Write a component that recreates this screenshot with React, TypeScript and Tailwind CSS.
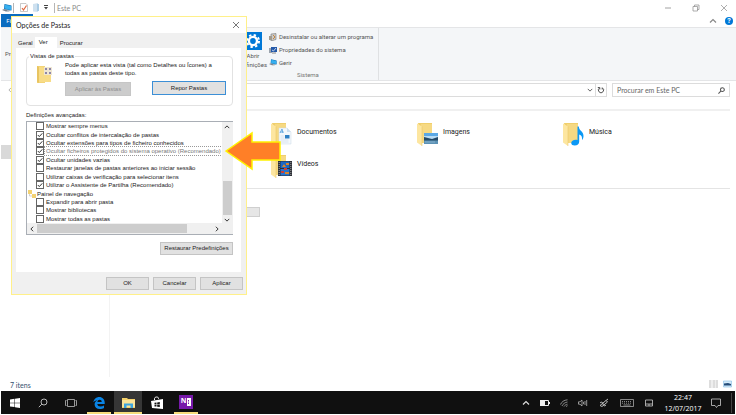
import React, {useState} from "react";

const UI_FONT = "font-[Roboto,'Open_Sans',sans-serif]";
const LABEL_FONT = "font-[Lato,'Open_Sans',sans-serif]";
const CLOCK_FONT = "font-['Open_Sans','Noto_Sans',sans-serif]";
const DIALOG_FONT = "font-['Liberation_Sans',Arial,sans-serif]";

interface Option {
    label: string;
    checked: boolean;
    selected?: boolean;
}

const viewOptions: Option[] = [
    { label: "Mostrar sempre menus", checked: false },
    { label: "Ocultar conflitos de intercalação de pastas", checked: true },
    { label: "Ocultar extensões para tipos de ficheiro conhecidos", checked: true },
    { label: "Ocultar ficheiros protegidos do sistema operativo (Recomendado)", checked: true, selected: true },
    { label: "Ocultar unidades vazias", checked: true },
    { label: "Restaurar janelas de pastas anteriores ao iniciar sessão", checked: false },
    { label: "Utilizar caixas de verificação para selecionar itens", checked: false },
    { label: "Utilizar o Assistente de Partilha (Recomendado)", checked: true },
];

const navigationOptions: Option[] = [
    { label: "Expandir para abrir pasta", checked: false },
    { label: "Mostrar bibliotecas", checked: false },
    { label: "Mostrar todas as pastas", checked: false },
];

function Chevron(props: { dir: "up" | "down" | "left" | "right", className?: string }) {
    const paths = {
        up: "M1 5.5 4 2.5 7 5.5",
        down: "M1 2.5 4 5.5 7 2.5",
        left: "M5.5 1 2.5 4 5.5 7",
        right: "M2.5 1 5.5 4 2.5 7",
    };
    return (
        <svg viewBox="0 0 8 8" className={props.className || "size-1.5"} fill="none" stroke="currentColor" strokeWidth="1.2">
            <path d={paths[props.dir]}/>
        </svg>
    );
}

function PcIcon(props: { className: string }) {
    return (
        <svg viewBox="0 0 20 16" className={props.className}>
            <path d="M1 11.5 7 10l11 3-5 2.5H8z" fill="#a9b4bd"/>
            <path d="M5 0l14 3v10L4 10z" fill="#0c71b8"/>
            <path d="M6 1.300l12 2.700v8L5.200 9z" fill="#36b0f0"/>
            <path d="M0 12l4-1.500 7 2-3 2z" fill="#777f88"/>
        </svg>
    );
}

function FolderIcon(props: { children?: React.ReactNode }) {
    return (
        <svg viewBox="0 0 21 24" className="h-6 w-[21px] shrink-0">
            <path d="M1 1h14v19H5z" fill="#f0cf6c"/>
            <path d="M4 2h11v19H4z" fill="#f6d983"/>
            <path d="M0 1.500 5 4.500V24L0 20.500z" fill="#fde6a0"/>
            <path d="M5 4.500V24" stroke="#e5c260" strokeWidth=".5"/>
            {props.children}
        </svg>
    );
}

function DocumentsIcon() {
    return (
        <FolderIcon>
            <path d="M8 6h8l4 4v12H8z" fill="#f4f8fc" stroke="#cbd9e6" strokeWidth=".5"/>
            <path d="M16 6v4h4z" fill="#cbdff1"/>
            <path d="M9 11l2-4 1 4M9.500 10h3" stroke="#4a9bdc" strokeWidth=".8" fill="none"/>
            <path d="M9.500 14h4M9.500 16h4M9.500 18h8M9.500 20h8" stroke="#c0d3e5" strokeWidth=".5"/>
            <path d="M14 13h4.500v3.500H14z" fill="#2f80c4"/>
        </FolderIcon>
    );
}

function PicturesIcon() {
    return (
        <FolderIcon>
            <path d="M7 11h14v11H7z" fill="#b8dcf5"/>
            <path d="M7 11h14v3H7z" fill="#5ba8e5"/>
            <path d="M7 15l4 1 4 1 6-2v4H7z" fill="#234a69"/>
            <path d="M7 18.500h14V22H7z" fill="#5c92b5"/>
            <path d="M8 20h10" stroke="#a4c8de" strokeWidth=".6"/>
        </FolderIcon>
    );
}

function MusicIcon() {
    return (
        <FolderIcon>
            <path d="M14.500 4.500h1.300c.2 4.500 4.700 4.500 4.700 9.500 0 1.500-.5 3-1.500 4 .4-3-.5-5-2.800-5.500v7c0 2.500-1.800 4-4.500 4-2 0-3.500-.8-3.500-2.500 0-2 2-3.300 4.500-3.300.7 0 1.300.1 1.800.3z" fill="#0b98f5"/>
        </FolderIcon>
    );
}

function VideosIcon() {
    return (
        <FolderIcon>
            <path d="M7 7h14v15H7z" fill="#2c2f36"/>
            <path d="M9.500 7.500h9v6.500h-9z" fill="#1b67c5"/>
            <path d="M9.500 15h9v6.500h-9z" fill="#2674cf"/>
            <path d="M11 13l2-3 2 3zM15 9h3v2h-3zM14 18h4v2h-4z" fill="#d9862b"/>
            <path d="M10 17h3v2h-3zM13 14h3v2h-3z" fill="#c93f3b"/>
            <path d="M8.200 8v14M19.800 8v14" stroke="#bbb" strokeWidth=".8" strokeDasharray="1 1"/>
        </FolderIcon>
    );
}

function TitleBar() {
    return (
        <header className="flex h-3.5 items-center justify-between pl-px pr-2 pt-px text-[#8a8a8a]">
            <div className="flex items-center">
                <PcIcon className="h-2 w-2.5"/>
                <span className="ml-px h-2.5 border-l border-[#b5b5b5]"/>
                <svg viewBox="0 0 8 9" className="ml-1.5 h-[9px] w-2">
                    <path d="M.5.5h5.500l1.500 1.500v6.500h-7z" fill="#fff" stroke="#b2b2b2" strokeWidth=".7"/>
                    <path d="M2 5l1.500 2L6.500 2.500" fill="none" stroke="#e0663d" strokeWidth="1.200"/>
                </svg>
                <svg viewBox="0 0 7 9" className="ml-[5px] h-[9px] w-[7px]">
                    <path d="M0 1l5-1v9L0 8.500z" fill="#cfe1ef"/>
                    <path d="M4 1h2v7H4z" fill="#a9cbe4"/>
                </svg>
                <svg viewBox="0 0 4 5" className="ml-1 h-[5px] w-1" fill="#444">
                    <path d="M0 0h4v1H0zM0 2h4L2 4.500z"/>
                </svg>
                <span className="ml-1.5 mr-0.5 h-2.5 border-l border-[#b5b5b5]"/>
                <h1 className={`pt-px text-[7px] leading-2 ${LABEL_FONT}`}>Este PC</h1>
            </div>
            <div className="flex items-center gap-5">
                <button aria-label="Minimizar" className="flex h-3 w-2 items-center">
                    <svg viewBox="0 0 8 8" className="size-2" stroke="currentColor" strokeWidth=".8"><path d="M1 4h6"/></svg>
                </button>
                <button aria-label="Restaurar">
                    <svg viewBox="0 0 8 8" className="size-2" fill="none" stroke="currentColor" strokeWidth=".7">
                        <path d="M1 2.500h4.500V7H1zM2.500 2.500V1H7v4.500H5.500"/>
                    </svg>
                </button>
                <button aria-label="Fechar">
                    <svg viewBox="0 0 8 8" className="size-2" stroke="currentColor" strokeWidth=".7"><path d="M1 1l6 6M7 1 1 7"/></svg>
                </button>
            </div>
        </header>
    );
}

function Ribbon() {
    return (
        <>
            <nav className="flex h-[13px] items-center justify-between pr-[3px]">
                <button className="h-full w-8 bg-[#0a6cc0] text-[6px] text-white">Ficheiro</button>
                <div className="flex items-center gap-2">
                    <Chevron dir="up" className="size-2 text-[#888]"/>
                    <button aria-label="Ajuda" className="size-2 rounded-full bg-[#0078d7] text-[7px] leading-2 font-bold text-white">?</button>
                </div>
            </nav>
            <section className="flex h-[54px] border-y border-[#e4e5e7] bg-[#f4f6f8] text-[6px] text-[#555]">
                <div className="flex w-[237px] items-center pl-1 leading-2">
                    <span>Propriedades</span>
                </div>
                <div className="flex w-[141px] flex-col border-r border-[#dfe1e3]">
                    <div className="flex flex-1 gap-px">
                        <button className="flex w-[30px] flex-col items-center pt-1 leading-[9px]">
                            <svg viewBox="0 0 20 20" className="size-[18px] shrink-0">
                                <path d="M0 0h20v20H0z" fill="#0078d7"/>
                                <circle cx="10" cy="10" r="4.500" fill="none" stroke="#fff" strokeWidth="2.600"/>
                                <circle cx="10" cy="10" r="6.700" fill="none" stroke="#fff" strokeWidth="2.200" strokeDasharray="2.630"/>
                            </svg>
                            <span className="pt-px">Abrir</span>
                            <span>Definições</span>
                        </button>
                        <div className="flex flex-col pt-0.5 whitespace-nowrap">
                            <button className="flex h-[13px] items-center gap-0.5">
                                <svg viewBox="0 0 8 8" className="size-2">
                                    <path d="M2 1l5-.5v6L2 8z" fill="#c9c9c9" stroke="#777" strokeWidth=".6"/>
                                    <path d="M0 3h3v4H0z" fill="#a09a8e"/>
                                    <path d="M4 2l2 2-2 2" stroke="#c7863b" fill="none"/>
                                </svg>
                                Desinstalar ou alterar um programa
                            </button>
                            <button className="flex h-[13px] items-center gap-0.5">
                                <svg viewBox="0 0 8 8" className="size-2">
                                    <path d="M0 2h3v5H0z" fill="#9aa3ad"/>
                                    <path d="M2 1h6v5H2z" fill="#2459a9"/>
                                    <path d="M3 4l1.500 1L7 2" stroke="#fff" strokeWidth=".7" fill="none"/>
                                    <path d="M3 7h4" stroke="#888"/>
                                </svg>
                                Propriedades do sistema
                            </button>
                            <button className="flex h-[13px] items-center gap-0.5">
                                <PcIcon className="h-[7px] w-2"/>
                                Gerir
                            </button>
                        </div>
                    </div>
                    <div className="pb-px text-center leading-2 text-[#777]">Sistema</div>
                </div>
            </section>
        </>
    );
}

function AddressRow() {
    return (
        <div className="flex h-[18px] items-center gap-[5px] pr-1.5">
            <button aria-label="Retroceder" className="ml-1.5 w-12 text-[#aaa]"><Chevron dir="left"/></button>
            <div className="flex h-3.5 flex-1 items-center justify-end border border-[#dcdcdc] text-[#555]">
                <button aria-label="Localizações anteriores" className="px-0.5"><Chevron dir="down"/></button>
                <button aria-label="Atualizar" className="flex h-full w-[11px] items-center justify-center border-l border-[#dcdcdc]">
                    <svg viewBox="0 0 8 8" className="size-2" fill="none" stroke="currentColor" strokeWidth="1">
                        <path d="M2.500 2A2.600 2.600 0 1 0 5.500 2M.8 1.500h2v2M5.200 3.500v-2"/>
                    </svg>
                </button>
            </div>
            <label className="flex h-3.5 w-[118px] items-center border border-[#dcdcdc] px-1">
                <input
                    type="text"
                    aria-label="Procurar em Este PC"
                    placeholder="Procurar em Este PC"
                    className={`min-w-0 flex-1 text-[7px] outline-none placeholder:text-[#666] ${LABEL_FONT}`}
                />
                <svg viewBox="0 0 8 8" className="size-[7px] text-[#555]" fill="none" stroke="currentColor" strokeWidth="1.200">
                    <circle cx="5" cy="3" r="2.200"/>
                    <path d="M3.500 4.500.5 7.500"/>
                </svg>
            </label>
        </div>
    );
}

function FolderItem(props: { label: string, icon: React.ReactNode }) {
    return (
        <a href="#" className="flex h-8 items-start gap-[5px] text-[#222]">
            {props.icon}
            <span className="pt-[5px] text-[7px] leading-2.5">{props.label}</span>
        </a>
    );
}

function Explorer() {
    return (
        <div className={`ml-px flex min-h-0 flex-1 flex-col bg-white ${UI_FONT}`}>
            <TitleBar/>
            <Ribbon/>
            <AddressRow/>
            <div className="flex flex-1">
                <aside className="w-[109px] border-r border-[#f3f3f3] pt-[46px]">
                    <div className="h-3.5 bg-[#d9d9d9]"/>
                </aside>
                <main className="flex-1 pl-5 pr-1.5 pt-2.5">
                    <div className="border-t-2 border-[#f0f0f0] pb-0.5 pl-[141px] pt-[11px]">
                        <div className="grid grid-cols-[146px_146px_146px]">
                            <FolderItem label="Documentos" icon={<DocumentsIcon/>}/>
                            <FolderItem label="Imagens" icon={<PicturesIcon/>}/>
                            <FolderItem label="Música" icon={<MusicIcon/>}/>
                            <FolderItem label="Vídeos" icon={<VideosIcon/>}/>
                        </div>
                    </div>
                    <div className="border-t border-[#e4e4e4] pt-[18px]">
                        <div className="h-2.5 w-[130px] border border-[#cfcfcf] bg-[#e6e6e6]"/>
                    </div>
                </main>
            </div>
            <footer className="flex h-3.5 items-center justify-between pl-[9px] pr-1 text-[#33506e]">
                <span className={`pt-px text-[7px] leading-2 ${LABEL_FONT}`}>7 itens</span>
                <div className="flex gap-[5px]">
                    <button aria-label="Detalhes">
                        <svg viewBox="0 0 9 8" className="h-2 w-[9px]" stroke="#aaa" strokeWidth=".8">
                            <path d="M0 1h2.500M0 3h2.500M0 5h2.500M0 7h2.500M3.500 1H9M3.500 3H9M3.500 5H9M3.500 7H9" strokeDasharray="2.500 .5"/>
                        </svg>
                    </button>
                    <button aria-label="Ícones grandes">
                        <svg viewBox="0 0 9 8" className="h-2 w-[9px]">
                            <path d="M.5 1h8v6h-8z" fill="#d5ebfa" stroke="#84bce4" strokeWidth=".6"/>
                            <path d="M1 3.500l4-.5 3 1v1.500H1z" fill="#234d7a"/>
                        </svg>
                    </button>
                </div>
            </footer>
        </div>
    );
}

function OptionRow(props: Option) {
    const [checked, setChecked] = useState<boolean>(props.checked);
    const text = props.selected ? "outline-1 outline-dotted outline-[#999] text-[#777]" : "";

    return (
        <label className="flex min-h-0 items-center gap-px pl-[9px]">
            <span className="grid">
                <input
                    type="checkbox"
                    checked={checked}
                    onChange={e => setChecked(e.target.checked)}
                    className="peer col-start-1 row-start-1 size-2 appearance-none border border-[#666] bg-white"
                />
                <svg viewBox="0 0 8 8" className="invisible col-start-1 row-start-1 size-2 peer-checked:visible" fill="none" stroke="#333">
                    <path d="M1.800 4 3.300 5.600 6.300 2.300"/>
                </svg>
            </span>
            <span className={`px-px leading-2 whitespace-nowrap ${text}`}>{props.label}</span>
        </label>
    );
}

function DialogButton(props: { label: string, className: string, disabled?: boolean }) {
    return (
        <button disabled={props.disabled} className={`flex items-center justify-center border whitespace-nowrap ${props.className}`}>
            {props.label}
        </button>
    );
}

function FolderOptions() {
    const plain = "border-[#c4c4c4] bg-[#e1e1e1]";

    return (
        <div
            role="dialog"
            aria-label="Opções de Pastas"
            className={`absolute left-[11px] top-4 flex w-[236px] flex-col border border-[#fff08a] bg-[#f0f0f0] text-[6px] text-[#222] ${DIALOG_FONT}`}
        >
            <div className={`flex h-4 items-center justify-between bg-white pl-1 pr-1.5 text-[7px] ${LABEL_FONT}`}>
                <h2>Opções de Pastas</h2>
                <button aria-label="Fechar">
                    <svg viewBox="0 0 8 8" className="size-2" stroke="#555" strokeWidth=".8"><path d="M1 1l6 6M7 1 1 7"/></svg>
                </button>
            </div>
            <div className="pl-1 pr-[5px] pt-1">
                <div role="tablist" className="flex items-end">
                    <button role="tab" className="h-[9px] px-0.5 leading-[9px]">Geral</button>
                    <button role="tab" aria-selected="true" className="h-[11px] w-[22px] bg-white pb-px pl-1 text-left leading-[9px]">Ver</button>
                    <button role="tab" className="h-[9px] px-[3px] leading-[9px]">Procurar</button>
                </div>
                <div role="tabpanel" className="flex flex-col bg-white pb-[17px] pl-2.5 pr-2">
                    <fieldset className="mt-1 rounded-sm border border-[#e2e2e2] pb-[9px] pr-1.5">
                        <legend className="ml-0.5 px-px leading-2">Vistas de pastas</legend>
                        <div className="flex gap-[13px] pl-2.5 pt-px">
                            <svg viewBox="0 0 15 18" className="mt-1 h-[18px] w-[15px] shrink-0">
                                <path d="M0 1h8v17H0z" fill="#f3d477"/>
                                <path d="M2 2l12 1v14H2z" fill="#f8dc87"/>
                                <path d="M0 1l2 1v16l-2-1z" fill="#e8c461"/>
                                <path d="M7 2h8v8H7z" fill="#efe6d2"/>
                                <path d="M8 3h2v2H8zM12 3h2v2h-2zM8 7h2v2H8zM12 7h2v2h-2z" fill="#8d86a8"/>
                            </svg>
                            <div className="min-w-0 flex-1">
                                <p className="leading-2 whitespace-nowrap">
                                    Pode aplicar esta vista (tal como Detalhes ou Ícones) a
                                    <br/>
                                    todas as pastas deste tipo.
                                </p>
                                <div className="mt-1 flex items-start justify-between">
                                    <DialogButton label="Aplicar às Pastas" disabled className="mt-px h-3.5 w-[66px] border-[#c6c6c6] bg-[#cccccc] text-[#8c8c8c]"/>
                                    <DialogButton label="Repor Pastas" className="h-3.5 w-[74px] border-[#3c8fd6] bg-[#e1e1e1]"/>
                                </div>
                            </div>
                        </div>
                    </fieldset>
                    <h3 className="mt-[5px] leading-2">Definições avançadas:</h3>
                    <div className="mt-0.5 grid grid-cols-[1fr_11px] border border-[#a9aeb5]">
                        <div className="grid h-[101px] grid-rows-12">
                            {viewOptions.map(option => <OptionRow key={option.label} {...option}/>)}
                            <div className="flex min-h-0 items-center gap-px pl-px">
                                <svg viewBox="0 0 8 8" className="size-2">
                                    <path d="M0 0h4v4H0zM4 4h4v4H4z" fill="#f3d272"/>
                                    <path d="M1.500 4v2H4" stroke="#aaa" strokeWidth=".5" fill="none"/>
                                </svg>
                                <span className="leading-2">Painel de navegação</span>
                            </div>
                            {navigationOptions.map(option => <OptionRow key={option.label} {...option}/>)}
                        </div>
                        <div className="flex flex-col items-center justify-between bg-[#f0f0f0] pt-0.5">
                            <Chevron dir="up"/>
                            <div className="mt-auto mb-0.5 h-[34px] w-[9px] bg-[#cdcdcd]"/>
                            <Chevron dir="down"/>
                        </div>
                        <div className="flex h-[11px] items-center bg-[#f0f0f0] pl-0.5">
                            <Chevron dir="left"/>
                            <div className="ml-0.5 h-[9px] w-[150px] bg-[#cdcdcd]"/>
                            <Chevron dir="right" className="ml-auto mr-0.5 size-1.5"/>
                        </div>
                        <div className="bg-[#f0f0f0]"/>
                    </div>
                    <DialogButton label="Restaurar Predefinições" className={`mt-[7px] h-[13px] w-[73px] self-end ${plain}`}/>
                </div>
            </div>
            <div className="flex justify-end gap-1 px-[3px] pt-[5px] pb-1">
                <DialogButton label="OK" className={`h-[13px] w-[43px] ${plain}`}/>
                <DialogButton label="Cancelar" className={`h-[13px] w-[43px] ${plain}`}/>
                <DialogButton label="Aplicar" className={`h-[13px] w-[43px] ${plain}`}/>
            </div>
        </div>
    );
}

function PointerArrow() {
    return (
        <svg viewBox="0 0 58 40" className="absolute left-[224px] top-[131px] h-10 w-[58px]">
            <path d="M2 20 28 2v9h28v18H28v9z" fill="#ff7f27" stroke="#fff200" strokeWidth="1.500"/>
        </svg>
    );
}

function TaskButton(props: { label: string, className?: string, children: React.ReactNode }) {
    return (
        <button aria-label={props.label} className={`flex h-full w-7 items-center justify-center ${props.className || ""}`}>
            {props.children}
        </button>
    );
}

function Taskbar() {
    return (
        <footer className={`mx-px mb-px flex h-[23px] items-center justify-between bg-[#101010] pr-[3px] text-[#ddd] ${CLOCK_FONT}`}>
            <div className="flex h-full items-center">
                <TaskButton label="Iniciar">
                    <svg viewBox="0 0 10 10" className="size-2.5" fill="#fff">
                        <path d="M0 1.500l4.500-.7v3.900H0zM5 .7 10 0v4.700H5zM0 5.200h4.500v3.900L0 8.500zM5 5.200h5V10l-5-.8z"/>
                    </svg>
                </TaskButton>
                <TaskButton label="Procurar">
                    <svg viewBox="0 0 10 10" className="size-2.5" fill="none" stroke="#ccc" strokeWidth=".9">
                        <circle cx="6" cy="4" r="3"/>
                        <path d="M3.800 6.200.8 9.200"/>
                    </svg>
                </TaskButton>
                <TaskButton label="Vista de tarefas">
                    <svg viewBox="0 0 12 8" className="h-2 w-3" fill="none" stroke="#bbb" strokeWidth=".8">
                        <path d="M2.500.5h7v7h-7zM1.500 1.500H.5v5h1M10.500 1.500h1v5h-1"/>
                    </svg>
                </TaskButton>
                <div className="flex h-full gap-px">
                    <TaskButton label="Microsoft Edge">
                        <span className="flex h-full w-6 items-center justify-center border-b-2 border-[#f7dd7c] pt-0.5">
                            <svg viewBox="0 0 12 12" className="size-3">
                                <path d="M.3 5.300C.8 2.200 3.200 0 6.200 0c3.400 0 5.500 2.500 5.500 5.600v1.300H4.300c.1 1.700 1.500 2.500 3.200 2.500 1.400 0 2.500-.4 3.500-1v2.500c-1 .7-2.500 1.100-4.200 1.100C3.600 12 1.600 10.200 1.600 7.500c0-1.900 1-3.400 2.800-4.200C2.600 3.400 1.200 4.200.3 5.300zM4.400 5h4.300c0-1.300-.7-2.200-2.100-2.200C5.400 2.800 4.600 3.700 4.400 5z" fill="#0a84e4"/>
                            </svg>
                        </span>
                    </TaskButton>
                    <TaskButton label="Explorador de Ficheiros" className="border-b-2 border-[#f7dd7c] bg-[#363636] pt-0.5">
                        <svg viewBox="0 0 13 11" className="h-[11px] w-[13px]">
                            <path d="M0 1h5l1 1h7v9H0z" fill="#f5d26b"/>
                            <path d="M0 3h13v7H0z" fill="#fbe49a"/>
                            <path d="M2 11V6.500h9V11H8.500V8.500h-4V11z" fill="#3da5e0"/>
                        </svg>
                    </TaskButton>
                    <TaskButton label="Loja">
                        <svg viewBox="0 0 12 14" className="h-3.5 w-3">
                            <path d="M3.500 4V2.500C3.500.8 7.500.2 7.500 2.500V3" fill="none" stroke="#fff"/>
                            <path d="M0 5l12-2v10L1 12z" fill="#fff"/>
                            <path d="M3.500 6.800l2-.3v1.700h-2zM6.200 6.400l2.600-.4v2.200H6.200zM3.500 8.800h2v1.800l-2-.2zM6.200 8.800h2.600V11l-2.600-.3z" fill="#111"/>
                        </svg>
                    </TaskButton>
                    <TaskButton label="OneNote">
                        <span className="flex h-full w-6 items-center justify-center border-b-2 border-[#f7dd7c]">
                            <span className="flex h-3.5 w-3.5 items-center justify-center gap-px bg-[#7719aa] text-[7px] font-bold text-white">
                                N
                                <svg viewBox="0 0 4 8" className="h-2 w-1">
                                    <path d="M0 0h4v8H0z" fill="#fff"/>
                                    <path d="M1 2h1v1.500H1zM1 4.500h1V6H1z" fill="#7719aa"/>
                                </svg>
                            </span>
                        </span>
                    </TaskButton>
                </div>
            </div>
            <div className="flex items-center">
                <div className="flex items-center gap-2.5">
                    <Chevron dir="up" className="size-2"/>
                    <svg viewBox="0 0 10 6" className="h-1.5 w-2.5">
                        <path d="M.5.5h8v5h-8z" fill="none" stroke="#eee"/>
                        <path d="M0 0h5v6H0zM9 2h1v2H9z" fill="#eee"/>
                    </svg>
                    <svg viewBox="0 0 8 8" className="size-2" fill="none" stroke="#aaa" strokeWidth=".8">
                        <path d="M.5 5.500C1.500 3 4 1 7.500.8M2 7C2.800 5 5 3.300 7.500 3M4 7.500C4.800 6.200 6 5.400 7.500 5.200M6 7.500l1.500-.8"/>
                    </svg>
                    <svg viewBox="0 0 10 8" className="mr-px h-2 w-2.5" fill="none" stroke="#ccc" strokeWidth=".7">
                        <path d="M.5 2.800h1.500L4 1v6L2 5.200H.5zM5.500 2.800v2.400M7 2v4M8.700 1v6"/>
                    </svg>
                    <svg viewBox="0 0 10 10" className="mr-px size-2.5" fill="none" stroke="#ccc" strokeWidth=".9">
                        <path d="M1 7.500 7 2.500 8.500 4 3 8.500zM7 2.500 9 1M1 5c1-1.500 3-1 3 1S6 8.500 7 7"/>
                    </svg>
                    <svg viewBox="0 0 14 8" className="mr-px h-2 w-3.5" fill="none" stroke="#bbb" strokeWidth=".7">
                        <path d="M.5.5h13v7H.5z"/>
                        <path d="M2 2.500h10M2 4.200h10" strokeDasharray="1 1"/>
                        <path d="M3.500 6h7"/>
                    </svg>
                    <svg viewBox="0 0 8 8" className="size-2" fill="none" stroke="#ccc" strokeWidth=".8">
                        <path d="M.5 1h7v6h-7zM.5 5h7M4 5v2"/>
                    </svg>
                </div>
                <time className="ml-2.5 w-10 text-center text-[7px] leading-[11px] text-white">
                    22:47
                    <br/>
                    12/07/2017
                </time>
                <button aria-label="Centro de ação" className="ml-2 mr-2.5">
                    <svg viewBox="0 0 10 10" className="size-2.5" fill="none" stroke="#ccc" strokeWidth=".8">
                        <path d="M.5 1h9v6.500H7l-1.500 2-1.500-2H.5z"/>
                    </svg>
                </button>
                <span className="h-5 border-l border-[#444]"/>
            </div>
        </footer>
    );
}

export default function App() {
    return (
        <div className="relative flex h-screen flex-col overflow-hidden bg-white">
            <Explorer/>
            <Taskbar/>
            <FolderOptions/>
            <PointerArrow/>
        </div>
    );
}
